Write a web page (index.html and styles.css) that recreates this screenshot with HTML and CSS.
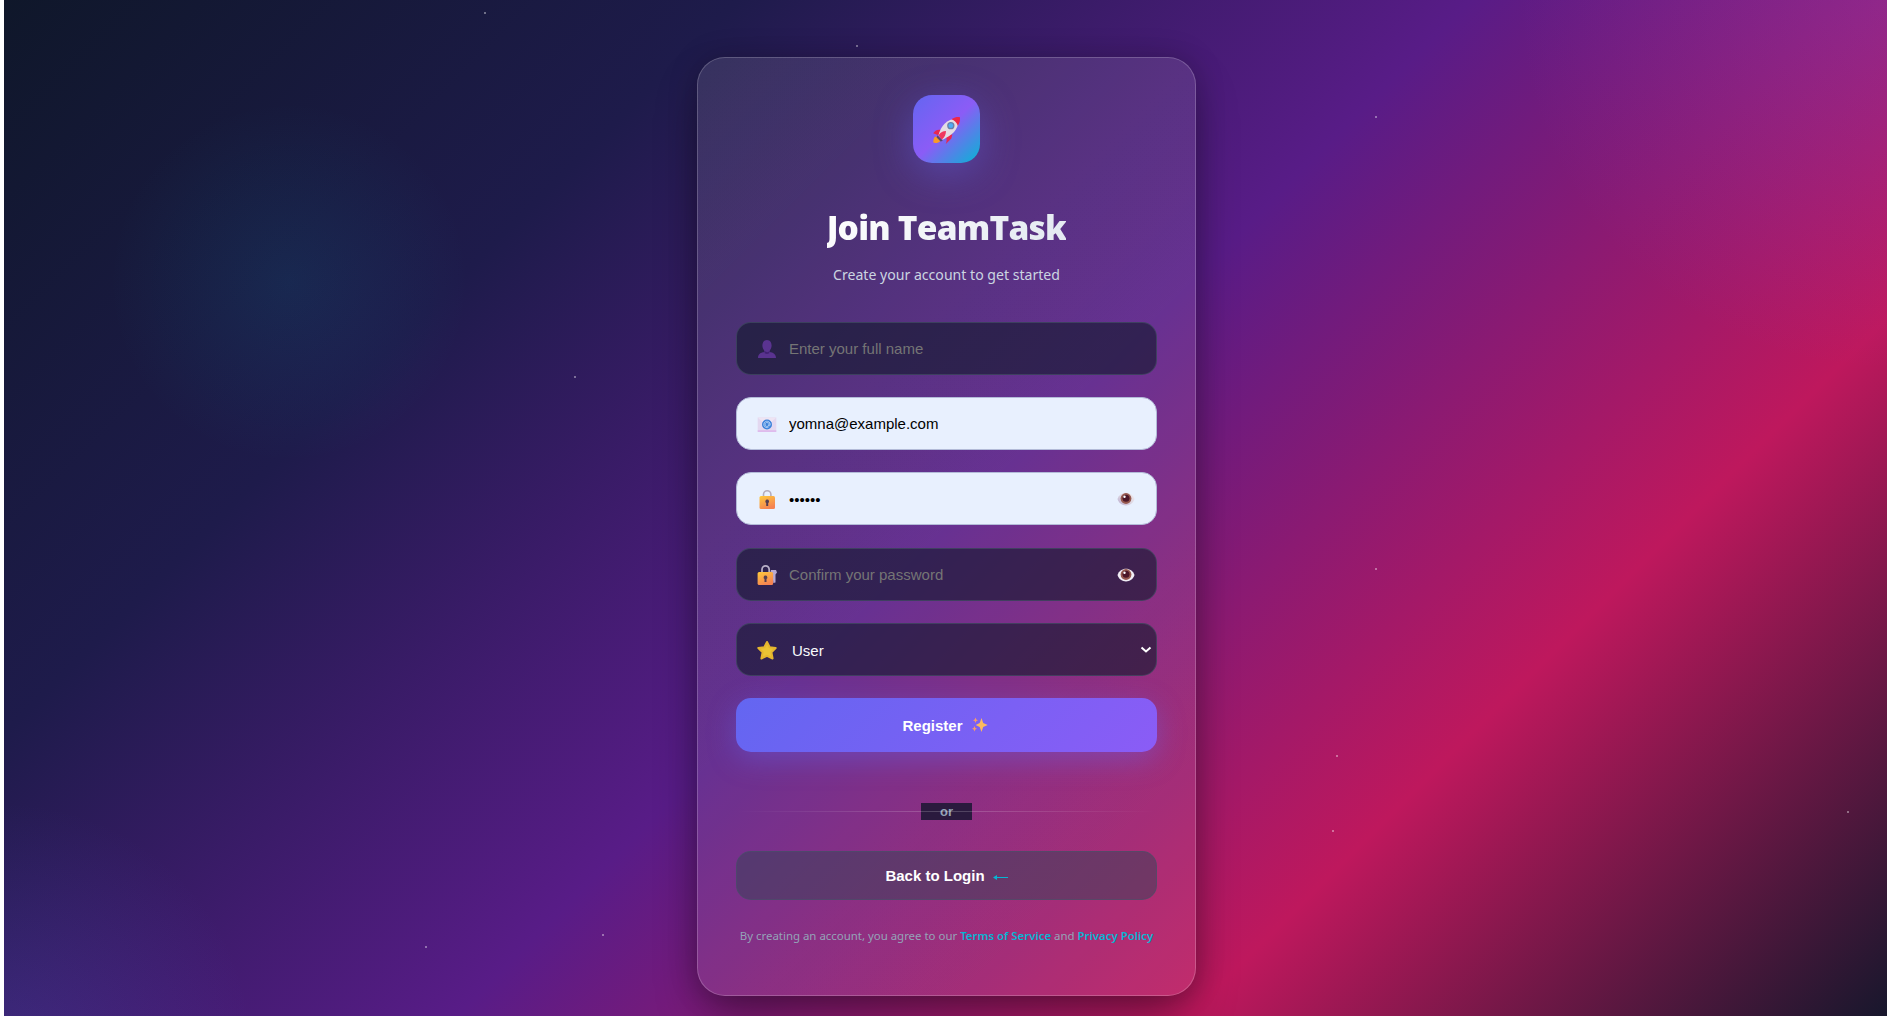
FILE: index.html
```html
<!DOCTYPE html>
<html lang="en">
<head>
<meta charset="utf-8">
<title>Join TeamTask</title>
<link rel="stylesheet" href="styles.css">
</head>
<body>
<main class="page">
  <div class="stars" aria-hidden="true">
    <i style="left:480px;top:12px"></i><i style="left:852px;top:45px"></i><i style="left:570px;top:376px"></i><i style="left:1371px;top:116px"></i><i style="left:1371px;top:568px"></i><i style="left:1332px;top:755px"></i><i style="left:1328px;top:830px"></i><i style="left:1843px;top:811px"></i><i style="left:421px;top:946px"></i><i style="left:598px;top:934px"></i>
  </div>
  <section class="card">
    <div class="logo">
      <svg width="30" height="30" viewBox="0 0 28 28">
        <path d="M4 20c-2 2-2 4-1.700 6 2.500.3 5 .2 6.700-2l-2.500-3z" fill="#f99b28"/>
        <path d="M9 14c-3-.5-5 .5-7 3l5 2zM14 20c1 3 .5 5-.2 7L19 22l1-4z" fill="#e82750"/>
        <path d="M7 19C9 10 15 4 24 3l2 2c-1 9-6 14-15 18z" fill="#e4dce4"/>
        <path d="M19 4c3-2 5.500-2.200 8-2 .3 2.500 0 5-2 8-1-3-3-5-6-6z" fill="#ed2748"/>
        <path d="M7 19c2-3 4-4 7-4-.2 3-1 6-4 8z" fill="#f0385e"/>
        <path d="M6 19l5 5-2 .8L5.300 21z" fill="#58486c"/>
        <circle cx="18.500" cy="10" r="3.400" fill="#697fa9"/><circle cx="18.500" cy="10" r="2.200" fill="#4eacf5"/>
      </svg>
    </div>
    <h1 class="title">Join TeamTask</h1>
    <p class="subtitle">Create your account to get started</p>
    <form class="form">
      <label class="field">
        <svg class="icon" viewBox="0 0 20 20"><path d="M1 19c0-4 3-5.500 6.500-6L7 11C4.500 9 4.500 1 10 1s5.500 8 3 10l-.5 2c3.500.5 6.500 2 6.500 6z" fill="#5a3390"/><path d="M7.500 12c2 1.500 4 1.500 5 0l-.3 2.200c-1.500 1-3 1-4.500 0z" fill="#422174"/></svg>
        <input type="text" placeholder="Enter your full name">
      </label>
      <label class="field filled">
        <svg class="icon" viewBox="0 0 20 20"><path d="M.7 3.500h18.600v14H.7z" fill="#e3d8f0"/><path d="M.7 3.500L10 12l9.300-8.500z" fill="#eee4f3"/><path d="M.7 16.500h18.600v1.200H.7z" fill="#dca9e8"/><circle cx="10" cy="10.500" r="5" fill="#3c82da"/><path d="M12 10.500a2 2 0 1 1-.8-1.600M12 8.500v2.800c.5 1 1.500.2 1.200-1A3.200 3.200 0 1 0 11.500 13.300" fill="none" stroke="#c3dcfa" stroke-width=".8"/></svg>
        <input type="text" value="yomna@example.com">
      </label>
      <label class="field filled">
        <svg class="icon" viewBox="0 0 20 20"><defs><linearGradient id="gold" x2=".5" y2="1"><stop stop-color="#ffca3b"/><stop offset="1" stop-color="#f58352"/></linearGradient><linearGradient id="white" x1="0" y1="1" x2="1" y2="0"><stop stop-color="#b9a9cc"/><stop offset=".5" stop-color="#ddd6e2"/><stop offset="1" stop-color="#f2eef2"/></linearGradient></defs><path d="M6.500 9V5.500a3.700 3.700 0 0 1 7.400 0V9" fill="none" stroke="#b4adbd" stroke-width="1.600"/><rect x="2.500" y="7" width="15.500" height="13" rx="1.500" fill="url(#gold)"/><path d="M10.200 10.500a1.900 1.900 0 0 1 1 3.500v3h-2v-3a1.900 1.900 0 0 1 1-3.500z" fill="#553d50"/></svg>
        <input type="password" value="yomna1">
        <svg class="eye" viewBox="0 0 18 14"><path d="M.5 7C3-1.500 15-1.500 17.500 7 15 15.500 3 15.500.5 7z" fill="url(#white)"/><circle cx="9" cy="6.500" r="5.400" fill="#96594f"/><circle cx="9" cy="6.200" r="3.500" fill="#4c1728"/><circle cx="7.500" cy="4.700" r="1.200" fill="#fff"/></svg>
      </label>
      <label class="field">
        <svg class="icon" viewBox="0 0 20 20"><path d="M5 9V4.500a3.600 3.600 0 0 1 7.200 0V9" fill="none" stroke="#b9b0c8" stroke-width="1.700"/><path d="M14 5h5l1 2.500-1.500 2v8l-2.200.5-.8-9-2-2z" fill="#b7a9d2"/><rect x=".6" y="7" width="15.500" height="13" rx="1.500" fill="url(#gold)"/><path d="M8.500 10.500a1.900 1.900 0 0 1 1 3.500v3h-2v-3a1.900 1.900 0 0 1 1-3.500z" fill="#553d50"/></svg>
        <input type="password" placeholder="Confirm your password">
        <svg class="eye" viewBox="0 0 18 14"><path d="M.5 7C3-1.500 15-1.500 17.500 7 15 15.500 3 15.500.5 7z" fill="#f1edf5"/><circle cx="9" cy="6.500" r="5.400" fill="#96594f"/><circle cx="9" cy="6.200" r="3.500" fill="#4c1728"/><circle cx="7.500" cy="4.700" r="1.200" fill="#fff"/></svg>
      </label>
      <label class="field">
        <svg class="icon" viewBox="0 0 20 20"><path d="M10 2l2.700 5.200 6 .8-4.300 4.200 1.200 6.300L10 15.800l-5.600 2.700 1.200-6.300L1.300 8l6-.8z" fill="#ebc334" stroke="#e5b52e" stroke-width="2" stroke-linejoin="round"/></svg>
        <select><option>User</option></select>
        <svg class="chevron" viewBox="0 0 12 8"><path d="M1.500 1.500L6 5.500l4.500-4" fill="none" stroke="#fff" stroke-width="2"/></svg>
      </label>
      <button class="register" type="button">Register
        <svg width="16" height="16" viewBox="0 0 16 16" fill="#fdbb5d"><path d="M9.500 1l1.700 5 4.500 2-4.500 2-1.700 5-1.800-5-4-2 4-2z"/><path d="M3.500.5l.8 2 1.700.8-1.700.8-.8 2-.8-2L1 3.300l1.700-.8zM2.500 9l.8 2 1.700.8-1.700.8-.8 2-.8-2L0 11.800l1.700-.8z" fill="#f99b68"/></svg>
      </button>
    </form>
    <div class="divider"><span>or</span></div>
    <button class="back" type="button">Back to Login
      <svg class="arrow" width="15" height="8" viewBox="0 0 15 8"><path d="M1 4.500h14" stroke="#06b6d4"/><path d="M0 4.500l4-2.500v5z" fill="#06b6d4"/></svg>
    </button>
    <p class="terms"><span>By creating an account, you agree to our <a>Terms of Service</a> and <a>Privacy Policy</a></span></p>
  </section>
</main>
</body>
</html>
```
FILE: styles.css
```css
* { box-sizing: border-box; }
html { background: #fff; overflow: hidden; }
body { margin: 0 0 0 4px; font-family: "Noto Sans", "Open Sans", sans-serif; height: 1016px; overflow: hidden; }
.page {
  position: relative;
  height: 1052px;
  display: flex;
  align-items: center;
  justify-content: center;
  padding-left: 2px;
  background:
    radial-gradient(circle at 285px 282px, rgba(6,182,212,.09), transparent 180px),
    radial-gradient(circle at 1883px 0, rgba(139,92,246,.2), transparent 370px),
    radial-gradient(circle at 0 1052px, rgba(99,102,241,.18), transparent 250px),
    linear-gradient(135deg, #0f172a 0%, #1e1b4b 25%, #581c87 50%, #be185d 75%, #0f172a 100%);
}
.stars i { position: absolute; width: 2px; height: 2px; border-radius: 1px; background: rgba(255,255,255,.5); }
.card {
  position: relative;
  width: 499px;
  height: 939px;
  padding: 37px 38px 0;
  border: 1px solid rgba(255,255,255,.2);
  border-radius: 28px;
  background: linear-gradient(135deg, rgba(255,255,255,.1), rgba(255,255,255,.09));
  box-shadow: 0 24px 48px -8px rgba(0,0,0,.4), 0 0 30px rgba(0,0,0,.2);
  display: flex;
  flex-direction: column;
}
.logo {
  align-self: center;
  width: 67px;
  height: 68px;
  border-radius: 19px;
  display: grid;
  place-items: center;
  padding: 3px 1px 0 0;
  background: linear-gradient(135deg, #6366f1, #8b5cf6 50%, #06b6d4);
  box-shadow: 0 10px 38px rgba(99,102,241,.4);
}
.title {
  margin: 39px 0 0;
  align-self: center;
  font: 800 33.500px/50px "Open Sans", "Noto Sans", sans-serif;
  letter-spacing: -.800px;
  color: transparent;
  background: linear-gradient(135deg, #fff, #e2e8f0);
  background-clip: text;
  white-space: nowrap;
}
.subtitle { margin: 11px 0 0; text-align: center; font-size: 14.100px; line-height: 24px; color: #cbd5e1; white-space: nowrap; }
.form { margin-top: 35px; display: flex; flex-direction: column; gap: 22.400px; }
.field {
  display: flex;
  align-items: center;
  height: 53px;
  padding: 0 4px 0 20px;
  border: 1px solid rgba(71,85,105,.6);
  border-radius: 15px;
  background: rgba(15,23,42,.6);
}
.field.filled { background: #e8f0fe; border-color: #b3bbd8; }
.icon { width: 20px; height: 20px; margin: 1px 12px 0 0; flex: none; }
.field input, .field select {
  flex: 1;
  min-width: 0;
  padding: 1px 0 0;
  border: 0;
  outline: 0;
  background: none;
  appearance: none;
  font: 15px "Liberation Sans", Arial, sans-serif;
  color: #f8fafc;
}
.field.filled input { color: #000; }
.field select { padding-left: 3px; }
.field input::placeholder { color: #757575; opacity: 1; }
.eye { width: 18px; height: 14px; margin: 1px 17px 0 0; }
.chevron { width: 12px; height: 8px; }
.register, .back {
  display: flex;
  align-items: center;
  justify-content: center;
  font: 700 15px "Liberation Sans", Arial, sans-serif;
  color: #fff;
  border-radius: 15px;
}
.register {
  height: 54px;
  gap: 9px;
  border: 0;
  padding-right: 9px;
  background: linear-gradient(135deg, #6366f1, #8b5cf6);
  box-shadow: 0 8px 28px rgba(99,102,241,.4);
}
.divider {
  margin-top: 51px;
  height: 17px;
  display: flex;
  justify-content: center;
  position: relative;
  font: 700 13px/18px "Liberation Sans", Arial, sans-serif;
  color: #94a3b8;
}
.divider span { width: 51px; text-align: center; background: #2a1a3e; }
.divider::after {
  content: "";
  position: absolute;
  left: 0; right: 0; top: 8px;
  height: 1px;
  background: linear-gradient(90deg, transparent, rgba(255,255,255,.2), transparent);
}
.back {
  margin-top: 31px;
  height: 49px;
  flex: none;
  gap: 8px;
  background: rgba(51,65,85,.5);
  border: 1px solid rgba(71,85,105,.55);
}
.arrow { margin-top: 2px; }
.terms { margin: 26px 0 0; display: flex; justify-content: center; font-size: 11.430px; line-height: 20px; color: #94a3b8; white-space: nowrap; }
.terms a { color: #06b6d4; font-weight: 600; }
```
